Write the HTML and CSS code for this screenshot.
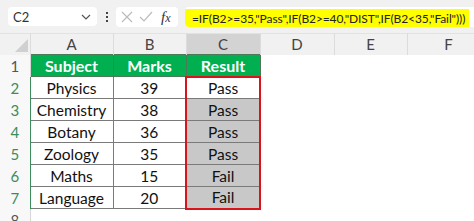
FILE: index.html
```html
<!DOCTYPE html>
<html lang="en">
<head>
  <meta charset="UTF-8" />
  <title>Excel IF formula</title>
  <link rel="stylesheet" href="styles.css">
</head>
<body>
  <!-- Name box and formula bar -->
  <div class="toolbar">
    <div class="name-box">
      <span>C2</span>
      <svg class="chev" width="10" height="6" viewBox="0 0 10 6"><path d="M1 1 L5 5 L9 1" fill="none" stroke="#555" stroke-width="1.2"/></svg>
    </div>
    <div class="dots"><i></i><i></i><i></i></div>
    <div class="fx-box">
      <svg width="12" height="12" viewBox="0 0 12 12"><path d="M1 1 L11 11 M11 1 L1 11" stroke="#bbb" stroke-width="1.2"/></svg>
      <svg width="14" height="12" viewBox="0 0 14 12"><path d="M1 6 L5 10 L13 1" fill="none" stroke="#bbb" stroke-width="1.2"/></svg>
      <span class="fx"><i>f</i><i>x</i></span>
    </div>
    <div class="formula">
      <span class="hl">=IF(B2&gt;=35,"Pass",IF(B2&gt;=40,"DIST",IF(B2&lt;35,"Fail")))</span>
    </div>
  </div>

  <table class="sheet">
    <colgroup>
      <col class="c-row"><col class="c-a"><col class="c-b"><col class="c-c"><col class="c-d"><col class="c-e"><col class="c-f">
    </colgroup>
    <tr class="col-head">
      <th class="corner"><span class="tri"></span></th>
      <th>A</th><th>B</th><th class="sel">C</th><th>D</th><th>E</th><th>F</th>
    </tr>
    <tr class="r1">
      <td class="rn">1</td>
      <td class="hd">Subject</td><td class="hd">Marks</td><td class="hd">Result</td>
      <td></td><td></td><td></td>
    </tr>
    <tr>
      <td class="rn on">2</td>
      <td class="d">Physics</td><td class="d">39</td><td class="d res first">Pass</td>
      <td></td><td></td><td></td>
    </tr>
    <tr>
      <td class="rn on">3</td>
      <td class="d">Chemistry</td><td class="d">38</td><td class="d res grey">Pass</td>
      <td></td><td></td><td></td>
    </tr>
    <tr>
      <td class="rn on">4</td>
      <td class="d">Botany</td><td class="d">36</td><td class="d res grey">Pass</td>
      <td></td><td></td><td></td>
    </tr>
    <tr>
      <td class="rn on">5</td>
      <td class="d">Zoology</td><td class="d">35</td><td class="d res grey">Pass</td>
      <td></td><td></td><td></td>
    </tr>
    <tr>
      <td class="rn on">6</td>
      <td class="d">Maths</td><td class="d">15</td><td class="d res grey">Fail</td>
      <td></td><td></td><td></td>
    </tr>
    <tr>
      <td class="rn on">7</td>
      <td class="d">Language</td><td class="d">20</td><td class="d res grey last">Fail</td>
      <td></td><td></td><td></td>
    </tr>
    <tr class="r8">
      <td class="rn">8</td>
      <td></td><td></td><td></td><td></td><td></td><td></td>
    </tr>
  </table>
</body>
</html>
```

FILE: styles.css
```css
* {
  margin: 0;
  padding: 0;
  box-sizing: border-box;
}

body {
  font-family: Lato, "Open Sans", sans-serif;
  background-color: #fff;
  width: 474px;
  height: 221px;
  overflow: hidden;
}

.toolbar {
  height: 33px;
  background-color: #f1f1f1;
  display: flex;
  align-items: flex-start;
  padding: 7px 0 0 8px;
  white-space: nowrap;
}

.name-box {
  width: 89px;
  height: 19px;
  background-color: #fff;
  border-radius: 4px;
  display: flex;
  align-items: center;
  justify-content: space-between;
  padding: 0 6px 0 5px;
  font-size: 13px;
  color: #333;
}

.dots {
  width: 19px;
  height: 19px;
  display: flex;
  flex-direction: column;
  align-items: center;
  justify-content: center;
  gap: 2px;
}

.dots i {
  width: 2px;
  height: 2px;
  background-color: #444;
}

.fx-box {
  width: 62px;
  height: 20px;
  background-color: #fff;
  border-radius: 4px;
  display: flex;
  align-items: center;
  gap: 6px;
  padding-left: 5px;
}

.fx {
  font-family: "Liberation Serif", serif;
  font-style: italic;
  font-size: 15px;
  color: #333;
  margin-left: 2px;
}

.fx i + i {
  font-size: 12px;
}

.formula {
  margin-left: 7px;
  flex: 1;
  height: 20px;
  background-color: #fff;
  border-radius: 4px 0 0 4px;
  overflow: hidden;
}

.hl {
  display: inline-block;
  height: 20px;
  line-height: 20px;
  background-color: #ffff00;
  padding: 0 4px 0 7px;
  font-size: 12px;
  color: #222;
  letter-spacing: -0.1px;
}

.sheet {
  border-collapse: collapse;
  table-layout: fixed;
  width: 490px;
}

.c-row { width: 30px; }
.c-a { width: 83px; }
.c-b { width: 73px; }
.c-c { width: 74px; }
.c-d { width: 74px; }
.c-e { width: 73px; }
.c-f { width: 83px; }

.sheet td,
.sheet th {
  padding: 0;
  text-align: center;
  vertical-align: middle;
  overflow: hidden;
  white-space: nowrap;
}

.col-head th {
  height: 21px;
  background-color: #f1f1f1;
  font-weight: normal;
  font-size: 15px;
  color: #444;
  border-right: 1px solid #dcdcdc;
  border-top: 1px solid #e2e2e2;
}

.col-head th.sel {
  background-color: #d3d3d3;
}

.corner {
  position: relative;
}

.tri {
  position: absolute;
  right: 2px;
  bottom: 3px;
  width: 0;
  height: 0;
  border-left: 13px solid transparent;
  border-bottom: 13px solid #d0d0d0;
}

.sheet tr td { height: 22px; }
.r1 td { height: 21px; }
.r8 td { height: 16px; }

.rn {
  font-size: 15px;
  color: #555;
  background-color: #f8f8f8;
  border-right: 1px solid #d6d6d6;
}

.rn.on {
  color: #3c8c5c;
  border-right: 1px solid #3c8c5c;
}

.hd {
  background-color: #00b050;
  color: #fff;
  font-weight: bold;
  font-size: 16px;
  border: 1px solid #4a7a58;
}

.d {
  font-size: 15.5px;
  color: #111;
  border: 1px solid #7a7a7a;
}

.res {
  border-left: 2px solid #d9141b;
  border-right: 2px solid #d9141b;
}

.res.first {
  border-top: 2px solid #d9141b;
}

.res.grey {
  background-color: #c8c8c8;
}

.res.last {
  border-bottom: 2px solid #d9141b;
}
```
